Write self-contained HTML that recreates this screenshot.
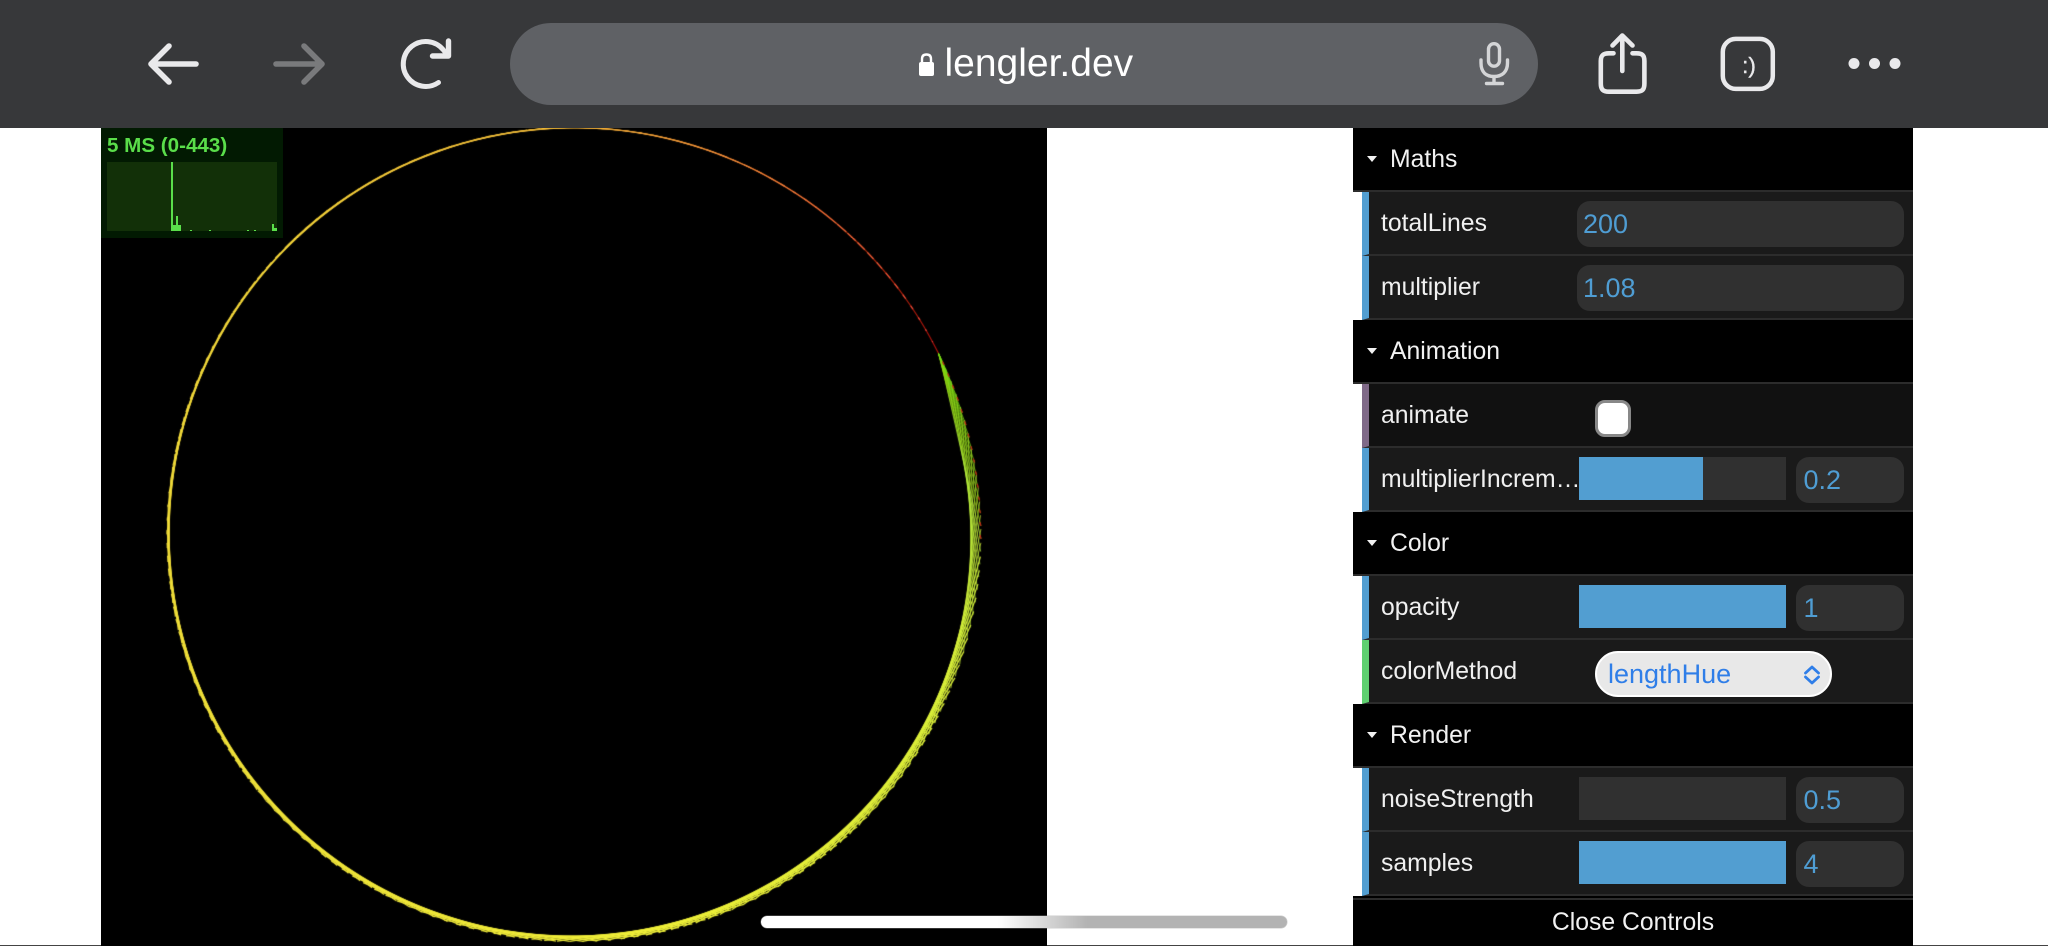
<!DOCTYPE html>
<html lang="en">
<head>
<meta charset="utf-8">
<title>lengler.dev</title>
<style>
html,body{margin:0;padding:0;width:2048px;height:946px;overflow:hidden;background:#fff;font-family:"Liberation Sans",sans-serif;}
#stage{position:absolute;left:0;top:0;width:2048px;height:946px;overflow:hidden;background:#fff;}
#toolbar{position:absolute;left:0;top:0;width:2048px;height:128px;background:#37383a;}
#url{position:absolute;left:510px;top:23px;width:1028px;height:82px;border-radius:41px;background:#5f6165;}
#host{position:absolute;left:944.5px;top:25.5px;font-size:39px;line-height:76px;color:#fff;white-space:nowrap;}
#icons{position:absolute;left:0;top:0;}
#cv{position:absolute;left:101px;top:128px;width:946px;height:818px;background:#000;}
#stats{position:absolute;left:101px;top:128px;width:182px;height:110px;background:#021a02;overflow:hidden;}
#stats .t{position:absolute;left:6px;top:0;font-size:20.6px;font-weight:bold;line-height:32px;height:32px;color:#5ade4a;white-space:nowrap;margin-top:2px;}
#graph{position:absolute;left:6px;top:34px;width:170px;height:69px;background:#123008;}
#graph i{position:absolute;background:#5ade4a;display:block;}
#gui{position:absolute;left:1353px;top:128px;width:560px;height:818px;}
.h{position:absolute;left:0;width:560px;height:64px;box-sizing:border-box;background:#000;border-bottom:2.6px solid #2c2c2c;color:#f2f2f2;font-size:24.75px;line-height:63px;padding-left:37px;}
.h:before{content:"";position:absolute;left:14px;top:28px;width:0;height:0;border-left:5.5px solid transparent;border-right:5.5px solid transparent;border-top:6px solid #f2f2f2;}
.r{position:absolute;left:9px;width:551px;height:64px;box-sizing:border-box;background:#1a1a1a;border-left:7px solid #529ed1;border-bottom:2.6px solid #2c2c2c;color:#f0f0f0;font-size:24.75px;line-height:63px;padding-left:12px;white-space:nowrap;}
.r.b{background:#111;border-left-color:#806a88;}
.r.g{border-left-color:#5fd070;}
.in{position:absolute;left:207.5px;top:9px;width:327px;height:45.5px;border-radius:13px;background:#303030;color:#4f9dd3;font-size:27px;line-height:62px;box-sizing:border-box;overflow:hidden;}
.in span{position:absolute;left:6.5px;top:-8.5px;}
.sl{position:absolute;left:210px;top:9px;width:207px;height:43px;background:#303030;}
.sl i{display:block;height:100%;background:#529ed1;}
.nm{position:absolute;left:427px;top:9px;width:108px;height:45.5px;border-radius:13px;background:#303030;color:#4f9dd3;font-size:27px;line-height:62px;overflow:hidden;}
.nm span{position:absolute;left:7.5px;top:-8.5px;}
.cb{position:absolute;left:225.5px;top:16px;width:36px;height:36.5px;box-sizing:border-box;background:#fff;border:3px solid #888;border-radius:10px;}
.se{position:absolute;left:225.5px;top:11px;width:237.5px;height:45.5px;box-sizing:border-box;border:2px solid #fff;border-radius:23px;background:#e8e8e8;color:#2f7ee8;font-size:27px;line-height:43px;padding-left:11.5px;}
.se svg{position:absolute;left:205px;top:12px;}
#close{position:absolute;left:0;top:768px;width:560px;height:50px;background:#000;color:#f2f2f2;font-size:24.75px;text-align:center;}
#close b{display:block;position:absolute;left:0;top:2px;width:560px;height:2px;background:#2c2c2c;}
#close span{position:absolute;left:0;width:560px;top:2px;line-height:50px;font-weight:normal;}
#home{position:absolute;left:761px;top:916px;width:526px;height:12px;border-radius:6px;background:linear-gradient(90deg,#fff 0,#fff 45%,#b3b3b3 62%,#b3b3b3 100%);box-shadow:0 0 0 .5px rgba(170,170,170,.6);}
#edge{position:absolute;left:0;top:945px;width:2048px;height:1px;background:#444;}
</style>
</head>
<body>
<div id="stage">
  <div id="edge"></div>
  <div id="toolbar">
    <div id="url"></div>
    <div id="host">lengler.dev</div>
    <svg id="icons" width="2048" height="128" viewBox="0 0 2048 128" fill="none" stroke-linecap="round" stroke-linejoin="round">
      <path d="M196 64H152M169 46L151 64L169 82" stroke="#e9e9eb" stroke-width="5.600"/>
      <path d="M276 64H321M304 46L322 64L304 82" stroke="#797a7c" stroke-width="5.600"/>
      <path d="M438.500 82.500A22.500 22.500 0 1 1 443 49.500L447 54.500" stroke="#e9e9eb" stroke-width="5"/>
      <path d="M448.500 41V56H432.500" stroke="#e9e9eb" stroke-width="5.400"/>
      <rect x="919" y="62" width="15" height="14" rx="2" fill="#fff"/>
      <path d="M922 63V59C922 55.500 924 54.500 926.500 54.500C929 54.500 931 55.500 931 59V63" stroke="#fff" stroke-width="2.400"/>
      <g transform="translate(1 1)">
        <rect x="1487.500" y="42.700" width="11" height="22.500" rx="5.500" stroke="#d4d5d7" stroke-width="3.400"/>
        <path d="M1480 59V62C1480 71 1485 75.500 1493 75.500C1501 75.500 1506.500 71 1506.500 62V59M1493 75.500V82M1485.500 82.500H1501.500" stroke="#d4d5d7" stroke-width="3.400"/>
      </g>
      <path d="M1613.500 53.300H1609C1603 53.300 1600.800 55.500 1600.800 61V83.500C1600.800 89.500 1603 91.700 1609 91.700H1636.500C1642.500 91.700 1644.400 89.500 1644.400 83.500V61C1644.400 55.500 1642.500 53.300 1636.500 53.300H1632.500" stroke="#e9e9eb" stroke-width="4.600"/>
      <path d="M1622.300 71V36M1612.500 45.500L1622.300 35.500L1632.500 45.500" stroke="#e9e9eb" stroke-width="4.600"/>
      <rect x="1722.800" y="38.900" width="50" height="50" rx="13" stroke="#e9e9eb" stroke-width="4.500"/>
      <text x="1749" y="73" font-family="Liberation Sans, sans-serif" font-size="22.500" fill="#e9e9eb" stroke="#e9e9eb" stroke-width=".4" text-anchor="middle">:)</text>
      <circle cx="1854" cy="63.500" r="5.500" fill="#e9e9eb"/>
      <circle cx="1874.500" cy="63.500" r="5.500" fill="#e9e9eb"/>
      <circle cx="1895" cy="63.500" r="5.500" fill="#e9e9eb"/>
    </svg>
  </div>

  <canvas id="cv" width="946" height="818"></canvas>

  <div id="stats">
    <div class="t">5 MS (0-443)</div>
    <div id="graph">
      <i style="left:64px;top:0;width:2px;height:69px"></i>
      <i style="left:64px;top:63px;width:10px;height:6px"></i>
      <i style="left:69px;top:54px;width:2px;height:15px"></i>
      <i style="left:83px;top:67.500px;width:2px;height:1.500px"></i>
      <i style="left:102px;top:67.500px;width:2px;height:1.500px"></i>
      <i style="left:140px;top:67.500px;width:2px;height:1.500px"></i>
      <i style="left:147px;top:67.500px;width:2px;height:1.500px"></i>
      <i style="left:165px;top:62px;width:2px;height:7px"></i>
      <i style="left:167px;top:66px;width:2.500px;height:3px"></i>
    </div>
  </div>

  <div id="gui">
    <div class="h" style="top:0">Maths</div>
    <div class="r" style="top:64px">totalLines<div class="in"><span>200</span></div></div>
    <div class="r" style="top:128px">multiplier<div class="in"><span>1.08</span></div></div>
    <div class="h" style="top:192px">Animation</div>
    <div class="r b" style="top:256px">animate<div class="cb"></div></div>
    <div class="r" style="top:320px">multiplierIncrem…<div class="sl"><i style="width:124px"></i></div><div class="nm"><span>0.2</span></div></div>
    <div class="h" style="top:384px">Color</div>
    <div class="r" style="top:448px">opacity<div class="sl"><i style="width:207px"></i></div><div class="nm"><span>1</span></div></div>
    <div class="r g" style="top:512px">colorMethod<div class="se">lengthHue<svg width="20" height="20" viewBox="0 0 20 20" fill="none" stroke="#2f7ee8" stroke-width="2.800" stroke-linecap="round" stroke-linejoin="round"><path d="M3.500 8L10 2L16.500 8M3.500 12L10 18L16.500 12"/></svg></div></div>
    <div class="h" style="top:576px">Render</div>
    <div class="r" style="top:640px">noiseStrength<div class="sl"></div><div class="nm"><span>0.5</span></div></div>
    <div class="r" style="top:704px">samples<div class="sl"><i style="width:207px"></i></div><div class="nm"><span>4</span></div></div>
    <div id="close"><b></b><span>Close Controls</span></div>
  </div>

  <div id="home"></div>
</div>
<script>
(function(){
  var c=document.getElementById('cv'),x=c.getContext('2d');
  x.fillStyle='#000';x.fillRect(0,0,946,818);
  var cx=473,cy=406.5,r=407,N=200,m=1.08;
  var a0=-26.4*Math.PI/180,d=1.8*Math.PI/180;
  function P(i){var a=a0-i*d;return [cx+r*Math.cos(a),cy+r*Math.sin(a)];}
  var st=[[0,2],[36,42],[60,50],[87,54],[110,56],[138,60],[171,68],[185,80],[200,92]];
  function hue(i){for(var k=1;k<st.length;k++){if(i<=st[k][0]){var t=(i-st[k-1][0])/(st[k][0]-st[k-1][0]);return st[k-1][1]+t*(st[k][1]-st[k-1][1]);}}return 92;}
  x.lineCap='butt';
  for(var i=0;i<60;i++){
    x.beginPath();
    x.arc(cx,cy,r,a0-i*d,a0-(i+1)*d,true);
    x.strokeStyle='hsl('+hue(i)+',88%,'+(i<15?38:(i<30?46:55))+'%)';
    x.lineWidth=1.1;x.stroke();
  }
  for(var i=1;i<=N;i++){
    var to=Math.min(i*m,N),p=P(i),q=P(to);
    x.beginPath();x.moveTo(p[0],p[1]);x.lineTo(q[0],q[1]);
    x.strokeStyle='hsl('+hue(i)+',85%,'+(i>185?46:58)+'%)';
    x.lineWidth=i>170?.75:1.2;x.stroke();
    if(i>184&&i<200){
      var dx=q[0]-p[0],dy=q[1]-p[1],l=Math.sqrt(dx*dx+dy*dy)||1;
      x.beginPath();x.moveTo(p[0],p[1]);x.lineTo(p[0]+dx/l*4,p[1]+dy/l*4);
      x.strokeStyle='hsl(5,80%,42%)';x.lineWidth=1.2;x.stroke();
    }
  }
})();
</script>
</body>
</html>
